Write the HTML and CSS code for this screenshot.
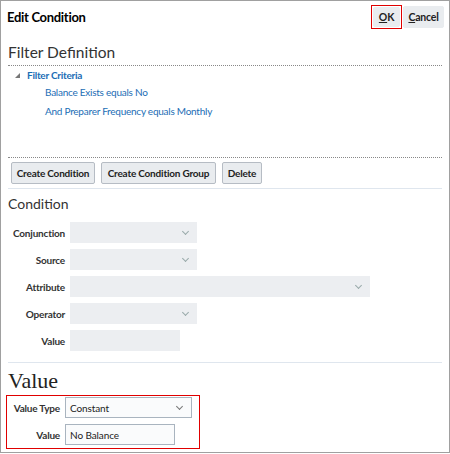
FILE: index.html
```html
<!DOCTYPE html>
<html>
<head>
<meta charset="utf-8">
<link rel="stylesheet" href="styles.css">
</head>
<body>
<div class="frame">
  <div class="header">
    <div class="title">Edit Condition</div>
    <div class="actions">
      <div class="hl-ok"><button class="btn ok"><u>O</u>K</button></div>
      <button class="btn cancel"><u>C</u>ancel</button>
    </div>
  </div>
  <div class="section-title">Filter Definition</div>
  <div class="dotted"></div>
  <div class="tree">
    <div class="tree-root"><span class="tri"></span><span class="root-label">Filter Criteria</span></div>
    <div class="tree-item">Balance Exists equals No</div>
    <div class="tree-item">And Preparer Frequency equals Monthly</div>
  </div>
  <div class="dotted"></div>
  <div class="toolbar">
    <button class="btn b-cc">Create Condition</button>
    <button class="btn b-ccg">Create Condition Group</button>
    <button class="btn b-del">Delete</button>
  </div>
  <div class="light-line"></div>
  <div class="section-title cond">Condition</div>
  <div class="form">
    <div class="row"><span class="lbl">Conjunction</span><span class="field w127"><span class="chev"></span></span></div>
    <div class="row"><span class="lbl">Source</span><span class="field w127"><span class="chev"></span></span></div>
    <div class="row"><span class="lbl">Attribute</span><span class="field w300"><span class="chev"></span></span></div>
    <div class="row"><span class="lbl">Operator</span><span class="field w127"><span class="chev"></span></span></div>
    <div class="row"><span class="lbl">Value</span><span class="field w110"></span></div>
  </div>
  <div class="light-line lower"></div>
  <div class="value-title">Value</div>
  <div class="hl-box">
    <div class="row2"><span class="lbl2">Value Type</span><span class="field2 w127">Constant<span class="chev dark"></span></span></div>
    <div class="row2"><span class="lbl2">Value</span><span class="field2 w110">No Balance</span></div>
  </div>
</div>
</body>
</html>
```

FILE: styles.css
```css
* { box-sizing: border-box; }
html, body { margin: 0; padding: 0; background: #fff; }
body { font-family: Lato, "Open Sans", sans-serif; color: #333; }
.frame {
  width: 450px; height: 453px;
  border: 1px solid #a0a0a0;
}
.header {
  display: flex; justify-content: space-between; align-items: flex-start;
  padding: 4px 5px 0 6px;
  height: 36px;
}
.title { font-weight: 700; font-size: 13px; color: #000; padding-top: 4px; letter-spacing: -0.3px; }
.actions { display: flex; align-items: center; gap: 1px; }
.hl-ok { display: flex; border: 1px solid #e00000; padding: 1px; }
.btn {
  font-family: Lato, sans-serif; font-weight: 700; font-size: 10px; color: #222;
  letter-spacing: -0.2px;
  background: #e9ecef; border: 1px solid #b6bcc4; border-radius: 2px;
  height: 22px; padding: 0; margin: 0;
}
.header .btn { border-color: #e9ecef; height: 20px; font-size: 10.5px; }
.header .cancel { height: 22px; }
.ok { width: 27px; }
.cancel { width: 41px; }
.b-cc { width: 84px; }
.b-ccg { width: 115px; }
.b-del { width: 40px; }
.section-title { font-size: 15.5px; color: #333; padding: 6px 0 0 7px; height: 28px; }
.dotted { margin: 0 7px; border-top: 1px dotted #888; height: 0; }
.tree { height: 91px; padding-top: 1px; font-size: 10px; letter-spacing: -0.25px; color: #1b6db5; }
.tree-root { display: flex; align-items: center; padding-left: 14px; height: 16px; }
.tri { width: 0; height: 0; border-left: 5px solid transparent; border-bottom: 5px solid #777; margin-right: 7px; }
.root-label { font-weight: 700; }
.tree-item { padding-left: 44px; height: 19px; padding-top: 3px; }
.toolbar { display: flex; gap: 6px; padding: 4px 0 0 10px; height: 30px; }
.light-line { margin: 0 7px; border-top: 1px solid #dfe6ee; height: 0; }
.cond { font-size: 14px; padding-top: 6px; height: 33px; }
.form { display: flex; flex-direction: column; gap: 6px; }
.row { display: flex; align-items: center; height: 21px; }
.lbl { width: 69px; text-align: right; font-weight: 700; font-size: 10px; letter-spacing: -0.2px; color: #333; padding-right: 5px; }
.field { display: block; height: 21px; background: #eceef1; position: relative; }
.w127 { width: 127px; }
.w300 { width: 300px; }
.w110 { width: 110px; }
.chev { position: absolute; right: 9px; top: 7px; width: 5px; height: 5px; border-right: 1px solid #9aa; border-bottom: 1px solid #9aa; transform: rotate(45deg); }
.chev.dark { border-color: #777; top: 6px; }
.lower { margin-top: 11px; }
.value-title { font-family: "Liberation Serif", serif; font-size: 22px; color: #222; padding: 5px 0 0 7px; height: 32px; }
.hl-box { margin-left: 5px; width: 194px; height: 54px; border: 1px solid #e00000; padding: 1px 0 0 0; display: flex; flex-direction: column; gap: 6px; }
.row2 { display: flex; align-items: center; height: 21px; }
.lbl2 { width: 58px; text-align: right; font-weight: 700; font-size: 10px; letter-spacing: -0.2px; color: #333; padding-right: 5px; }
.field2 { display: flex; align-items: center; height: 21px; border: 1px solid #a9b4bf; background: #fafbfc; position: relative; font-size: 10px; letter-spacing: -0.1px; color: #222; padding-left: 4px; }
```
